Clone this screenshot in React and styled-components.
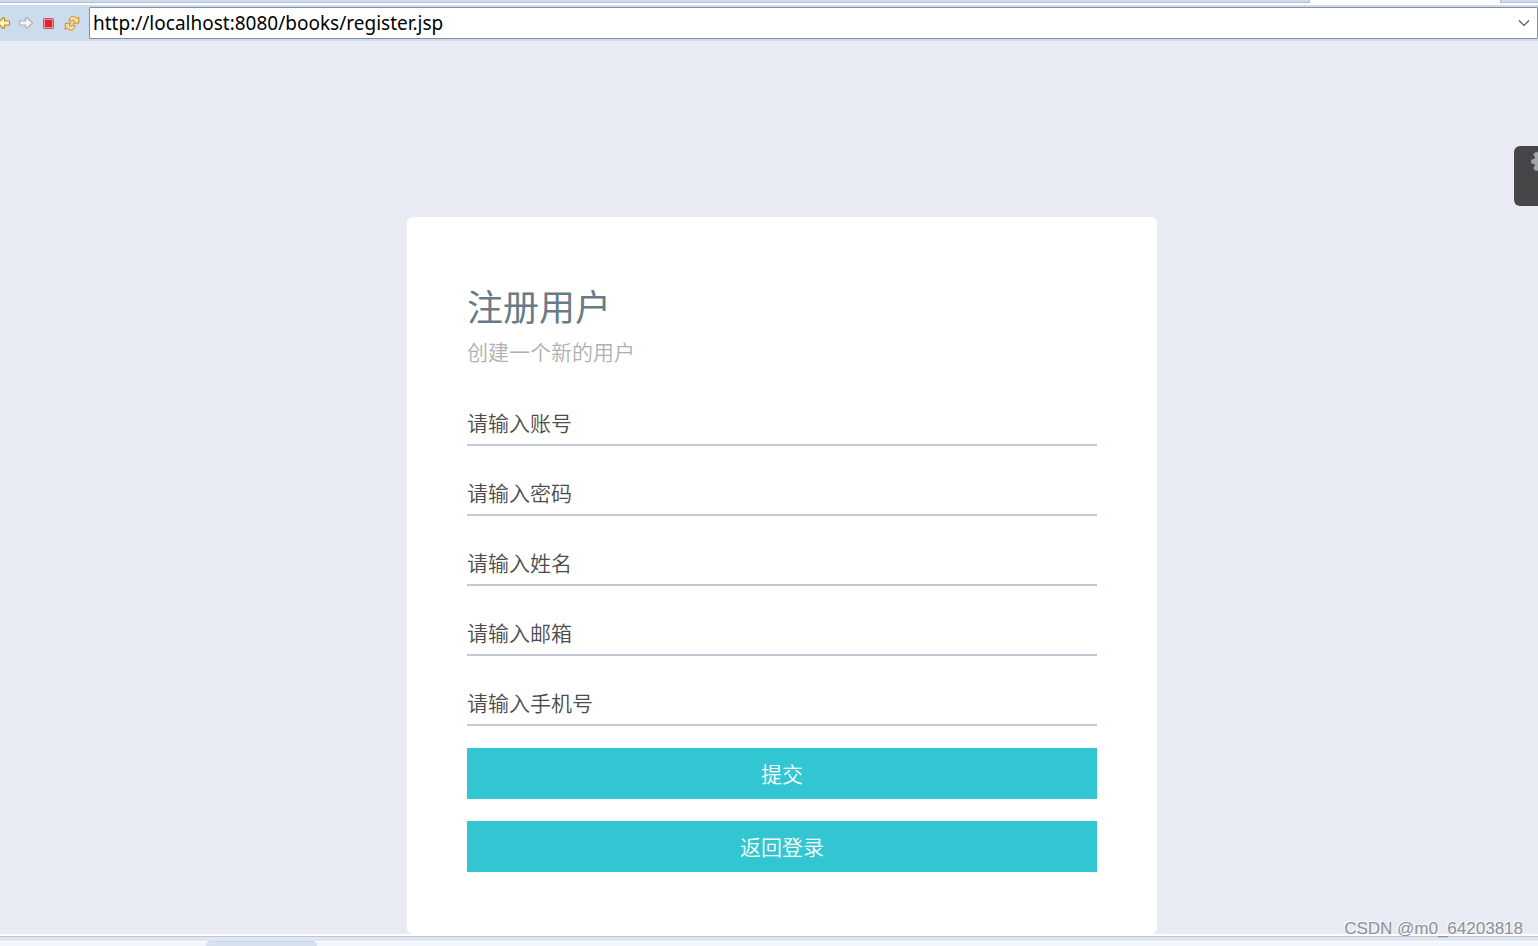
import React from "react";
import styled, { createGlobalStyle } from "styled-components";

const GlobalStyle = createGlobalStyle`
  *, *::before, *::after { box-sizing: border-box; }
  body {
    margin: 0;
    background: #e8ebf3;
    font-family: "Noto Sans CJK SC", sans-serif;
  }
`;

const Window = styled.div`
  position: relative;
  display: flex;
  flex-direction: column;
  min-height: 100vh;
  overflow: hidden;
`;

const TabStrip = styled.div`
  display: flex;
  justify-content: flex-end;
  height: 5px;
  background: #fff;
`;

const TabStripFill = styled.div`
  flex: ${(p) => (p.$end ? "0 0 38px" : "1")};
  height: 3px;
  background: #cddcec;
  border-bottom: 1px solid #aebbd3;
  border-right: ${(p) => (p.$end ? "0" : "1px solid #aebbd3")};
  border-left: ${(p) => (p.$end ? "1px solid #aebbd3" : "0")};
`;

const ActiveTab = styled.div`
  flex: 0 0 190px;
  background: #fff;
`;

const Toolbar = styled.header`
  display: flex;
  align-items: center;
  height: 36px;
  padding: 2px 0;
  background: #cddcec;
`;

const ToolButtons = styled.nav`
  display: flex;
  align-items: center;
  gap: 7px;
  width: 89px;
  overflow: hidden;
`;

const ToolButton = styled.button`
  flex: 0 0 ${(p) => (p.$clipped ? "11px" : "16px")};
  display: flex;
  justify-content: flex-end;
  min-width: 0;
  height: 16px;
  padding: 0;
  border: 0;
  background: none;
  svg { flex: none; }
`;

const AddressBar = styled.div`
  display: flex;
  flex: 1;
  height: 32px;
  background: #fff;
  border: 1px solid #8a8d91;
  border-radius: 1px;
`;

const AddressInput = styled.input`
  flex: 1;
  min-width: 0;
  padding: 0 3px;
  border: 0;
  outline: 0;
  background: none;
  color: #000;
  font: 19px "Noto Sans", sans-serif;
`;

const HistoryButton = styled.button`
  display: flex;
  align-items: center;
  justify-content: center;
  width: 26px;
  padding: 0;
  border: 0;
  background: none;
`;

const Stage = styled.main`
  flex: 1;
  display: flex;
  justify-content: center;
  align-items: flex-start;
  padding: 176px 0 0 26px;
  background: #e8ebf3;
`;

const Card = styled.section`
  width: 750px;
  padding: 60px 60px 62px;
  background: #fff;
  border-radius: 6px;
`;

const Title = styled.h1`
  margin: 0 0 4px;
  color: #6a7b88;
  font-size: 36px;
  font-weight: 400;
  line-height: 56px;
`;

const Subtitle = styled.p`
  margin: 0 0 35px;
  color: #b0b0b0;
  font-size: 21px;
  font-weight: 350;
  line-height: 28px;
`;

const Form = styled.form`
  display: flex;
  flex-direction: column;
  gap: 22px;
`;

const Fields = styled.div`
  display: flex;
  flex-direction: column;
  gap: 24px;
`;

const Field = styled.input`
  width: 100%;
  height: 46px;
  padding: 0;
  border: 0;
  border-bottom: 2px solid #c2cad8;
  outline: 0;
  background: none;
  color: #555;
  font: 350 21px "Noto Sans CJK SC", sans-serif;
  &::placeholder { color: #4c4c4c; opacity: 1; }
`;

const ActionButton = styled.button`
  height: 51px;
  padding: 0 0 2px;
  border: 0;
  background: #32c5d2;
  color: #fff;
  font: 350 21px "Noto Sans CJK SC", sans-serif;
`;

const SettingsTab = styled.button`
  position: absolute;
  top: 146px;
  right: 0;
  display: flex;
  width: 24px;
  height: 60px;
  padding: 3px 0 0 17px;
  overflow: hidden;
  border: 0;
  border-radius: 6px 0 0 6px;
  background: #444648;
  svg { flex: none; }
`;

const StatusBar = styled.footer`
  height: 12px;
  background: #f3f5fc;
  border-top: 2px solid #fff;
`;

const StatusEdge = styled.div`
  height: 6px;
  background: #dfe6f5;
  border-top: 1px solid #c4c6ca;
  border-bottom: 1px solid #fff;
`;

const StatusTab = styled.div`
  width: 111px;
  height: 5px;
  margin: -1px 0 0 206px;
  background: #d8e2ee;
  border-top: 1px solid #cdd7e5;
  border-radius: 5px 5px 0 0;
`;

const Watermark = styled.div`
  position: absolute;
  right: 15px;
  bottom: 7px;
  color: #8d9094;
  font: 17px/20px "Liberation Sans", sans-serif;
  text-shadow: -1px -1px 0 #fff;
`;

const BackIcon = () => (
  <svg width="16" height="16" viewBox="0 0 16 16" aria-hidden="true">
    <path
      d="M14.500 6H9.500V3.200L8.300 2.500 3 8l5.300 5.500 1.200-.7V10h5z"
      fill="#fff3c4"
      stroke="#c08a1e"
      strokeWidth="1.200"
      strokeLinejoin="round"
    />
  </svg>
);

const ForwardIcon = () => (
  <svg width="16" height="16" viewBox="0 0 16 16" aria-hidden="true">
    <path
      d="M1.500 6h6V3.200l1.200-.7L14.500 8l-5.800 5.500-1.200-.7V10h-6z"
      fill="#f4f4f4"
      stroke="#afb1b5"
      strokeWidth="1.200"
      strokeLinejoin="round"
    />
  </svg>
);

const StopIcon = () => (
  <svg width="16" height="16" viewBox="0 0 16 16" aria-hidden="true">
    <rect x="2.500" y="3.500" width="10" height="10" rx="1" fill="#f0909a" stroke="#c4505e" />
    <rect x="4" y="5" width="7" height="7" fill="#e3202b" />
  </svg>
);

const RefreshIcon = () => (
  <svg width="16" height="16" viewBox="0 0 16 16" aria-hidden="true">
    <g fill="#fbe08a" stroke="#c18b2c" strokeWidth="1" strokeLinejoin="round">
      <path d="M5.200 6.200C5 3 7.200.9 9.600 1.300c1.200.2 2.200 1 2.900 2.100l2.300-1.200v6H9.300l1.500-1.700C10 5 8.300 4.600 7.600 6.300z" />
      <path d="M10.800 10.300c.2 3.200-2 5.300-4.400 4.900-1.200-.2-2.200-1-2.900-2.100l-2.300 1.200v-6h5.500L5.200 10c.8 1.500 2.500 1.900 3.200.2z" />
    </g>
  </svg>
);

const ChevronIcon = () => (
  <svg width="12" height="8" viewBox="0 0 12 8" fill="none" aria-hidden="true">
    <path d="M1 1.500l5 5 5-5" stroke="#555" strokeWidth="1.200" />
  </svg>
);

const GearIcon = () => (
  <svg width="24" height="24" viewBox="0 0 24 24" aria-hidden="true">
    <path
      fill="#a0a5a8"
      fillRule="evenodd"
      d="M10 .5h4l.6 3 1.700.7L18.900 2.500l3 3-1.900 2.700.7 1.700 3 .5v4l-3 .6-.7 1.700 1.900 2.600-3 3-2.600-1.800-1.700.7-.6 3h-4l-.6-3-1.700-.7-2.600 1.800-3-3L4 16.700 3.300 15l-3-.6v-4l3-.5L4 8.200 2.100 5.500l3-3 2.600 1.700 1.700-.7zM12 8.500a4 4 0 1 0 0 8 4 4 0 0 0 0-8z"
    />
  </svg>
);

const fields = [
  { name: "account", text: "请输入账号" },
  { name: "password", text: "请输入密码", type: "password" },
  { name: "fullName", text: "请输入姓名" },
  { name: "email", text: "请输入邮箱", type: "email" },
  { name: "phone", text: "请输入手机号", type: "tel" },
];

export default function App() {
  return (
    <Window>
      <GlobalStyle />
      <TabStrip>
        <TabStripFill />
        <ActiveTab />
        <TabStripFill $end />
      </TabStrip>
      <Toolbar>
        <ToolButtons>
          <ToolButton $clipped type="button" aria-label="Back"><BackIcon /></ToolButton>
          <ToolButton type="button" aria-label="Forward"><ForwardIcon /></ToolButton>
          <ToolButton type="button" aria-label="Stop"><StopIcon /></ToolButton>
          <ToolButton type="button" aria-label="Refresh"><RefreshIcon /></ToolButton>
        </ToolButtons>
        <AddressBar>
          <AddressInput aria-label="Address" defaultValue="http://localhost:8080/books/register.jsp" />
          <HistoryButton type="button" aria-label="History"><ChevronIcon /></HistoryButton>
        </AddressBar>
      </Toolbar>
      <Stage>
        <Card>
          <Title>注册用户</Title>
          <Subtitle>创建一个新的用户</Subtitle>
          <Form onSubmit={(e) => e.preventDefault()}>
            <Fields>
              {fields.map((f) => (
                <Field key={f.name} name={f.name} type={f.type || "text"} placeholder={f.text} aria-label={f.text} />
              ))}
            </Fields>
            <ActionButton type="submit">提交</ActionButton>
            <ActionButton type="button">返回登录</ActionButton>
          </Form>
        </Card>
      </Stage>
      <StatusBar>
        <StatusEdge />
        <StatusTab />
      </StatusBar>
      <SettingsTab type="button" aria-label="Settings"><GearIcon /></SettingsTab>
      <Watermark>CSDN @m0_64203818</Watermark>
    </Window>
  );
}
